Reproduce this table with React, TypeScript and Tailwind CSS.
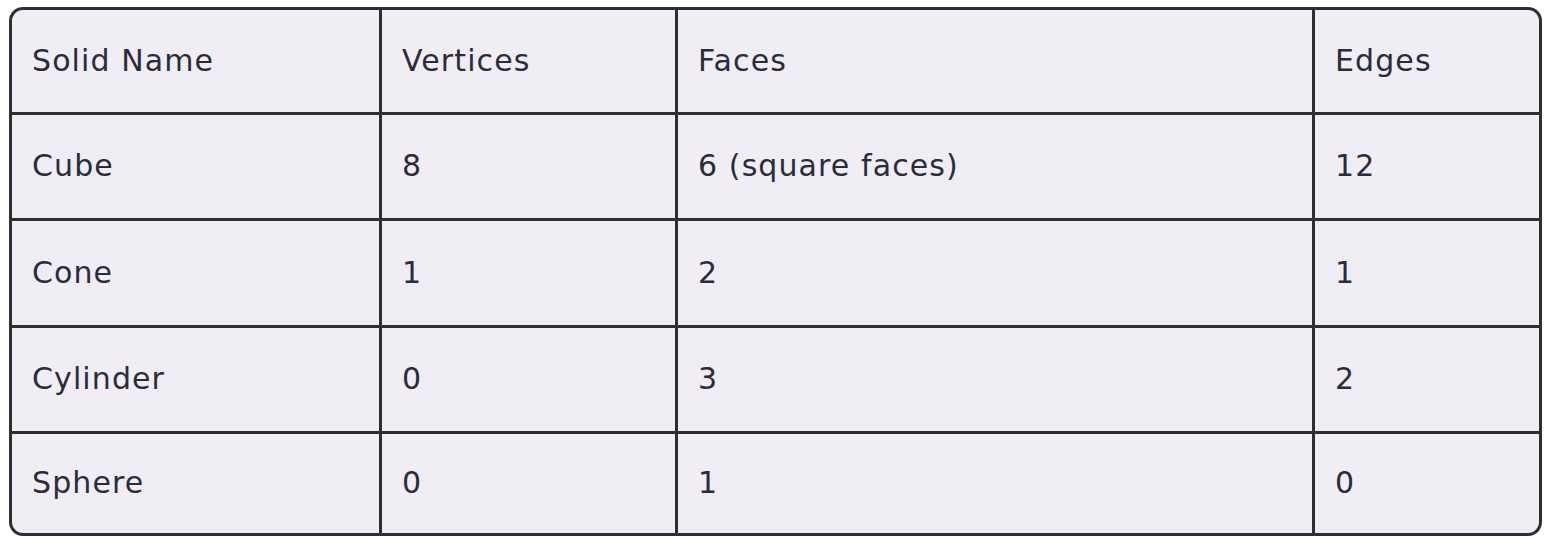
import React from "react";

const rows: string[][] = [
  ["Solid Name", "Vertices", "Faces", "Edges"],
  ["Cube", "8", "6 (square faces)", "12"],
  ["Cone", "1", "2", "1"],
  ["Cylinder", "0", "3", "2"],
  ["Sphere", "0", "1", "0"],
];

export default function App() {
  return (
    <div className="w-[1558px] h-[548px] bg-white pt-[7px] pl-[9px]">
      <div
        className="w-[1533px] h-[529px] bg-[#2f2f33] p-[3px] rounded-[14px] overflow-hidden grid grid-cols-[367px_293px_634px_224px] grid-rows-[102px_103px_104px_103px_99px] gap-[3px]"
        style={{ fontFamily: '"DejaVu Sans", "Open Sans", sans-serif' }}
      >
        {rows.flatMap((r, i) =>
          r.map((c, j) => (
            <div
              key={`${i}-${j}`}
              className={`bg-[#f0edf4] flex items-center pl-[20px] pb-[2px] text-[30px] text-[#2a2c3a] tracking-[1.1px] ${
                i === 0 && j === 0 ? "rounded-tl-[11px]" : ""
              } ${i === 0 && j === 3 ? "rounded-tr-[11px]" : ""} ${
                i === 4 && j === 0 ? "rounded-bl-[11px]" : ""
              } ${i === 4 && j === 3 ? "rounded-br-[11px]" : ""}`}
            >
              {c}
            </div>
          ))
        )}
      </div>
    </div>
  );
}
